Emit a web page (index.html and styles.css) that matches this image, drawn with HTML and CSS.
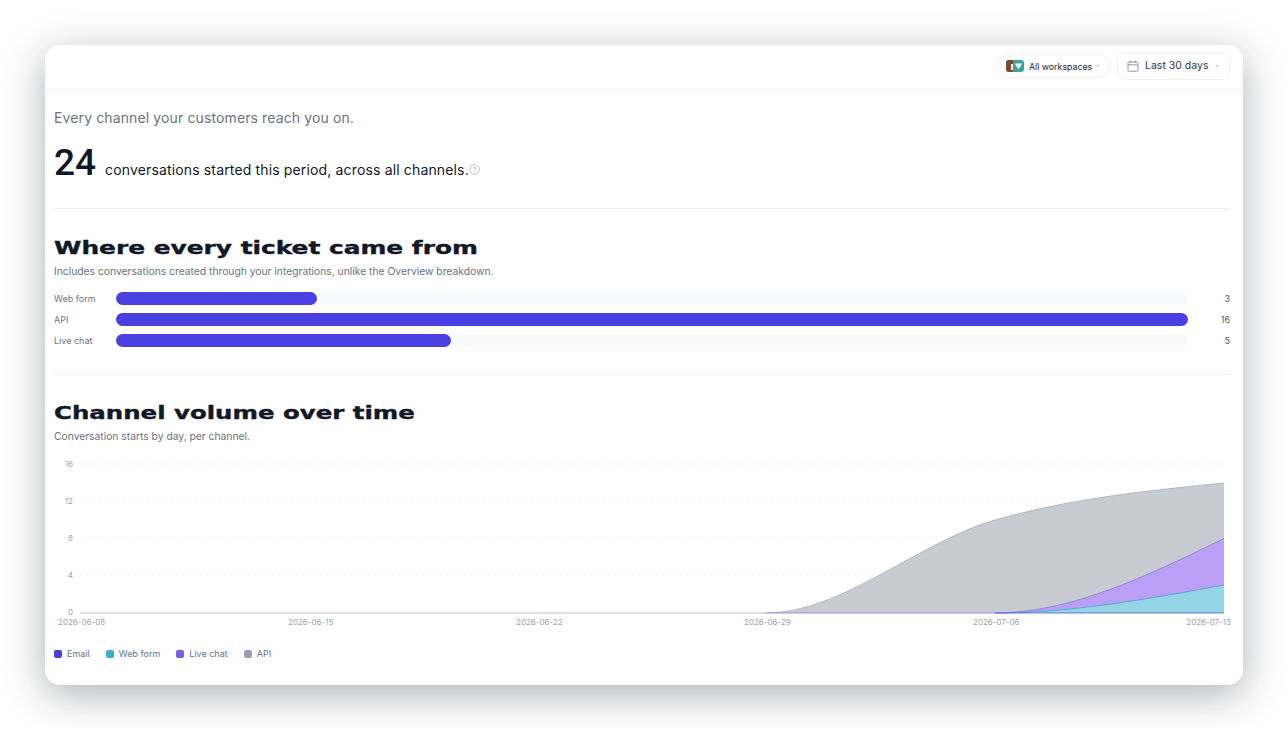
FILE: index.html
```html
<!DOCTYPE html>
<html lang="en">
<head>
    <meta charset="UTF-8">
    <title>Channels</title>
    <link rel="stylesheet" href="styles.css">
</head>
<body>
    <div class="card">
        <!-- Top bar -->
        <div class="topbar">
            <div class="workspace-pill">
                <svg class="workspace-icon" width="18" height="12" viewBox="0 0 18 12">
                    <rect width="18" height="12" rx="3" fill="#3aa596"/>
                    <path d="M3 0H7V12H3A3 3 0 0 1 0 9V3A3 3 0 0 1 3 0Z" fill="#7a4a2b"/>
                    <rect x="5" y="4" width="2" height="6" fill="#f3efe6"/>
                    <path d="M9 3.500H16L14.500 6.500L12.500 9L10.500 6.500Z" fill="#eaf7f5"/>
                </svg>
                <span>All workspaces</span>
                <span class="caret"></span>
            </div>
            <div class="date-btn">
                <svg width="12" height="12" viewBox="0 0 12 12" fill="none" stroke="#8a8f98" stroke-width="0.9">
                    <rect x="1" y="2" width="10" height="9.300" rx="1.200"/>
                    <path d="M1 4.800H11M3.600 0.700V3M8.400 0.700V3"/>
                </svg>
                <span>Last 30 days</span>
                <span class="caret"></span>
            </div>
        </div>

        <div class="content">
            <p class="intro">Every channel your customers reach you on.</p>
            <div class="total">
                <span class="total-num">24</span>
                <span class="total-text">conversations started this period, across all channels.</span>
                <svg class="help" width="11" height="11" viewBox="0 0 11 11" fill="none" stroke="#9ca3af" stroke-width="0.7">
                    <circle cx="5.500" cy="5.500" r="4.800"/>
                    <path d="M4.200 4.300A1.300 1.300 0 1 1 5.500 5.800V6.500M5.500 7.500V8.200"/>
                </svg>
            </div>

            <hr class="divider first">

            <h2 class="section-title">Where every ticket came from</h2>
            <p class="section-sub">Includes conversations created through your integrations, unlike the Overview breakdown.</p>

            <div class="bars">
                <div class="bar-row">
                    <span class="bar-label">Web form</span>
                    <div class="bar-track"><div class="bar-fill" style="width: 18.75%"></div></div>
                    <span class="bar-value">3</span>
                </div>
                <div class="bar-row">
                    <span class="bar-label">API</span>
                    <div class="bar-track"><div class="bar-fill" style="width: 100%"></div></div>
                    <span class="bar-value">16</span>
                </div>
                <div class="bar-row">
                    <span class="bar-label">Live chat</span>
                    <div class="bar-track"><div class="bar-fill" style="width: 31.25%"></div></div>
                    <span class="bar-value">5</span>
                </div>
            </div>

            <hr class="divider second">

            <h2 class="section-title volume-title">Channel volume over time</h2>
            <p class="section-sub">Conversation starts by day, per channel.</p>

            <!-- viewBox uses page x and y so the points read like the screenshot -->
            <svg class="chart" width="1177" height="174" viewBox="54 456 1177 174">
                <g class="grid">
                    <line x1="80" y1="464" x2="1224" y2="464"/>
                    <line x1="80" y1="501" x2="1224" y2="501"/>
                    <line x1="80" y1="538" x2="1224" y2="538"/>
                    <line x1="80" y1="575" x2="1224" y2="575"/>
                </g>
                <path class="area-api" d="M766 613C842 613 919 541.600 995 520C1071 498.400 1148 490.600 1224 483V613H766Z"/>
                <path class="area-chat" d="M995 613C1071 613 1148 575.600 1224 538.500V613H995Z"/>
                <path class="area-web" d="M995 613C1071 613 1148 599 1224 585V613H995Z"/>
                <path class="line-api" d="M80 613H766C842 613 919 541.600 995 520C1071 498.400 1148 490.600 1224 483"/>
                <path class="line-chat" d="M766 613H995C1071 613 1148 575.600 1224 538.500"/>
                <path class="line-web" d="M995 613C1071 613 1148 599 1224 585"/>
                <path class="line-email" d="M995 613H1224"/>
                <g class="y-labels">
                    <text x="73" y="467">16</text>
                    <text x="73" y="504">12</text>
                    <text x="73" y="541">8</text>
                    <text x="73" y="578">4</text>
                    <text x="73" y="615">0</text>
                </g>
                <g class="x-labels">
                    <text x="58" y="625">2026-06-08</text>
                    <text x="288" y="625">2026-06-15</text>
                    <text x="516" y="625">2026-06-22</text>
                    <text x="744" y="625">2026-06-29</text>
                    <text x="973" y="625">2026-07-06</text>
                    <text x="1231" y="625" text-anchor="end">2026-07-13</text>
                </g>
            </svg>

            <div class="legend">
                <span class="legend-item"><i class="swatch swatch-email"></i>Email</span>
                <span class="legend-item"><i class="swatch swatch-web"></i>Web form</span>
                <span class="legend-item"><i class="swatch swatch-chat"></i>Live chat</span>
                <span class="legend-item"><i class="swatch swatch-api"></i>API</span>
            </div>
        </div>
    </div>
</body>
</html>
```

FILE: styles.css
```css
body {
    font-family: "Inter", "Liberation Sans", sans-serif;
    background-color: #fff;
    margin: 0;
    padding: 45px;
    height: 640px;
    overflow: hidden;
}
.card {
    background-color: #fff;
    border-radius: 15px;
    height: 640px;
    box-shadow: 0 10px 40px rgba(20, 25, 35, 0.34);
}
/* Top bar */
.topbar {
    height: 41px;
    border-bottom: 1px solid #f0f1f3;
    padding: 0 13px 3px 0;
    display: flex;
    justify-content: flex-end;
    align-items: center;
    gap: 7px;
}
.workspace-pill {
    width: 113px;
    height: 24px;
    box-sizing: border-box;
    border: 1px solid #f1f2f4;
    border-radius: 12px;
    padding-left: 8px;
    display: flex;
    align-items: center;
    gap: 5px;
    font-size: 8.800px;
    color: #1f2430;
    margin-top: 1px;
}
.date-btn {
    width: 113px;
    height: 28px;
    box-sizing: border-box;
    border: 1px solid #f1f2f4;
    border-radius: 8px;
    padding-left: 9px;
    display: flex;
    align-items: center;
    gap: 6px;
    font-size: 10.500px;
    color: #333843;
}
.caret {
    width: 0;
    height: 0;
    border-left: 1.500px solid transparent;
    border-right: 1.500px solid transparent;
    border-top: 2px solid #a0a4ac;
}
.workspace-pill .caret {
    margin-left: 0;
}
.date-btn .caret {
    margin-left: 2px;
}
.content {
    padding: 0 13px 0 9px;
}
.intro {
    margin: 19px 0 0;
    font-size: 14px;
    line-height: 18px;
    letter-spacing: 0.12px;
    color: #6b7280;
}
.total {
    display: flex;
    align-items: baseline;
    margin-top: 15px;
    height: 42px;
    color: #111827;
}
.total-num {
    font-family: "Roboto", sans-serif;
    font-size: 37px;
    font-weight: 500;
    line-height: 42px;
    width: 51px;
}
.total-text {
    font-size: 14px;
    letter-spacing: 0.15px;
}
.help {
    align-self: flex-start;
    margin-top: 22px;
}
.divider {
    border: 0;
    border-top: 1px solid #f0f1f3;
    margin: 0;
}
.divider.first {
    margin-top: 24px;
}
.divider.second {
    margin-top: 27px;
}
.section-title {
    font-family: "DejaVu Sans", sans-serif;
    font-size: 18px;
    font-weight: 700;
    line-height: 22px;
    color: #111827;
    -webkit-text-stroke: 0.4px #111827;
    margin: 28px 0 0;
    width: max-content;
    transform: scaleX(1.38);
    transform-origin: left center;
}
.volume-title {
    margin-top: 27px;
    transform: scaleX(1.357);
}
.section-sub {
    margin: 5px 0 0;
    font-size: 10.300px;
    line-height: 14px;
    color: #6b7280;
}
/* Bars */
.bars {
    margin-top: 14px;
    display: flex;
    flex-direction: column;
    gap: 8px;
}
.bar-row {
    display: flex;
    align-items: center;
    height: 13px;
    font-size: 9px;
    color: #6b7280;
}
.bar-label {
    width: 62px;
}
.bar-track {
    flex-grow: 1;
    height: 13px;
    background-color: #f8fafb;
    border-radius: 7px;
}
.bar-fill {
    height: 13px;
    background-color: #4a3fe0;
    border-radius: 7px;
}
.bar-value {
    width: 42px;
    text-align: right;
    color: #4b5563;
}
/* Chart */
.chart {
    display: block;
    margin-top: 13px;
}
.grid line {
    stroke: #f3f4f5;
    stroke-width: 1;
    stroke-dasharray: 3 3;
}
.area-api { fill: #c8cbd2; }
.area-chat { fill: #b99ff5; }
.area-web { fill: #93d5e5; }
.line-api, .line-chat, .line-web, .line-email {
    fill: none;
    stroke-width: 0.8;
}
.line-api { stroke: #a9adb6; }
.line-chat { stroke: #8b78d8; }
.line-web { stroke: #4a9fd0; }
.line-email { stroke: #5a52e0; }
.y-labels text, .x-labels text {
    font-size: 8px;
    fill: #9ca3af;
}
.y-labels text {
    text-anchor: end;
}
.legend {
    display: flex;
    gap: 16px;
    margin-top: 18px;
    font-size: 9px;
    color: #6b7280;
}
.legend-item {
    display: flex;
    align-items: center;
    gap: 5px;
}
.swatch {
    width: 8px;
    height: 8px;
    border-radius: 2px;
}
.swatch-email { background-color: #4a3fe0; }
.swatch-web { background-color: #37afcd; }
.swatch-chat { background-color: #7c5ce0; }
.swatch-api { background-color: #9ca3af; }
```
